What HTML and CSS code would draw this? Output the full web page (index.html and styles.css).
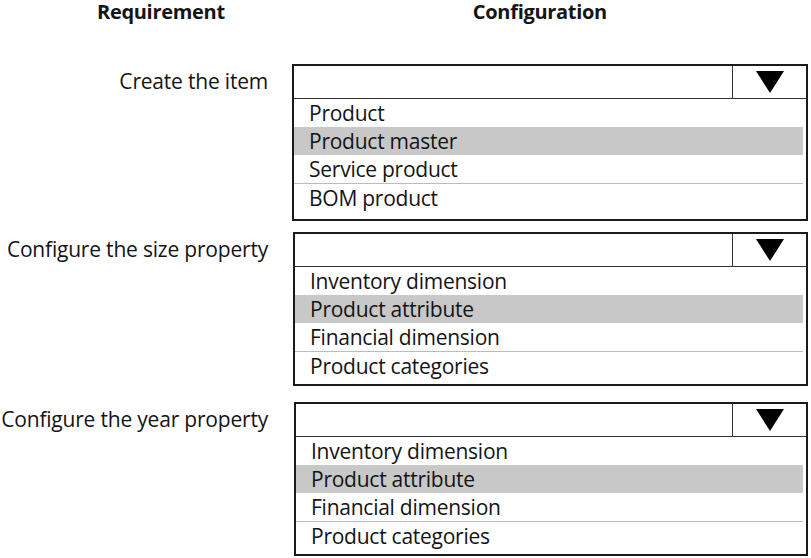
FILE: index.html
```html
<!DOCTYPE html>
<html>
<head>
<meta charset="utf-8">
<link rel="stylesheet" href="styles.css">
</head>
<body>
<div class="page">
  <div class="heads">
    <div class="head head-req">Requirement</div>
    <div class="head head-conf">Configuration</div>
  </div>

  <div class="row row-1">
    <div class="label">Create the item</div>
    <div class="box">
      <div class="box-head"><div class="box-field"></div><div class="box-arrow"><span class="tri"></span></div></div>
      <div class="item">Product</div>
      <div class="item sel">Product master</div>
      <div class="item">Service product</div>
      <div class="item ruled">BOM product</div>
    </div>
  </div>

  <div class="row row-2">
    <div class="label">Configure the size property</div>
    <div class="box">
      <div class="box-head"><div class="box-field"></div><div class="box-arrow"><span class="tri"></span></div></div>
      <div class="item">Inventory dimension</div>
      <div class="item sel">Product attribute</div>
      <div class="item">Financial dimension</div>
      <div class="item ruled">Product categories</div>
    </div>
  </div>

  <div class="row row-3">
    <div class="label">Configure the year property</div>
    <div class="box">
      <div class="box-head"><div class="box-field"></div><div class="box-arrow"><span class="tri"></span></div></div>
      <div class="item">Inventory dimension</div>
      <div class="item sel">Product attribute</div>
      <div class="item">Financial dimension</div>
      <div class="item ruled">Product categories</div>
    </div>
  </div>
</div>
</body>
</html>
```

FILE: styles.css
```css
html, body {
  margin: 0;
  padding: 0;
  background: #ffffff;
}
body {
  font-family: "Open Sans", "Noto Sans", sans-serif;
  color: #141414;
}
.page {
  width: 811px;
  height: 558px;
  overflow: hidden;
}
.heads {
  display: flex;
  height: 24px;
  align-items: flex-start;
}
.head {
  font-weight: 700;
  font-size: 20px;
  line-height: 24px;
  letter-spacing: -0.3px;
  white-space: nowrap;
}
.head-req {
  margin-left: 97px;
}
.head-conf {
  margin-left: 248px;
}
.row {
  display: grid;
  grid-template-columns: 292px 516px;
  align-items: start;
}
.row-1 { margin-top: 40px; }
.row-2 { margin-top: 11px; }
.row-3 { margin-top: 16px; }
.row-2 .box { margin-left: 1px; width: 515px; }
.row-3 .box { margin-left: 2px; width: 514px; }
.label {
  height: 34px;
  line-height: 34px;
  text-align: right;
  padding-right: 24px;
  font-size: 21px;
  letter-spacing: -0.2px;
  white-space: nowrap;
}
.box {
  border: 2px solid #1a1a1a;
  padding-bottom: 5px;
  box-sizing: border-box;
}
.row-1 .box { padding-bottom: 8px; }
.box-head {
  display: flex;
  height: 32px;
  border-bottom: 1px solid #333333;
}
.box-field {
  flex: 1;
}
.box-arrow {
  width: 73px;
  border-left: 1px solid #333333;
  display: flex;
  align-items: center;
  justify-content: center;
}
.tri {
  width: 0;
  height: 0;
  border-left: 14px solid transparent;
  border-right: 14px solid transparent;
  border-top: 22px solid #000000;
}
.item {
  height: 28px;
  line-height: 28px;
  padding-left: 15px;
  font-size: 21px;
  letter-spacing: -0.25px;
  margin-right: 3px;
  white-space: nowrap;
}
.item.sel {
  background: #c8c8c8;
}
.item.ruled {
  border-top: 1px solid #bcbcbc;
  height: 27px;
}
```
